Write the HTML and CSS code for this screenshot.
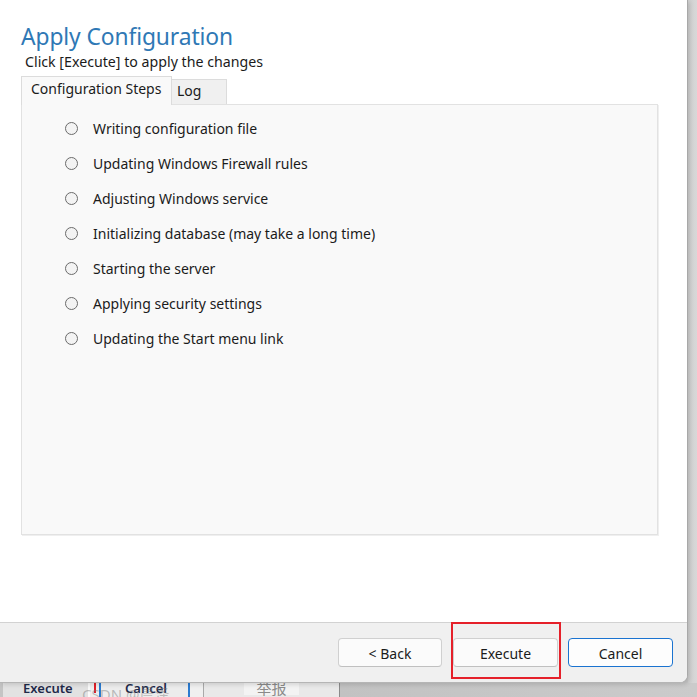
FILE: index.html
```html
<!DOCTYPE html>
<html lang="en">
<head>
<meta charset="utf-8">
<title>Apply Configuration</title>
<link rel="stylesheet" href="styles.css">
</head>
<body>
<div class="screen">
  <div class="top-row">
    <div class="window">
      <div class="main">
        <h1 class="title">Apply Configuration</h1>
        <p class="subtitle">Click [Execute] to apply the changes</p>
        <div class="tabs">
          <div class="tab tab-active">Configuration Steps</div>
          <div class="tab tab-log">Log</div>
        </div>
        <div class="panel">
          <ul class="steps">
            <li class="step"><span class="radio"></span><span class="step-text">Writing configuration file</span></li>
            <li class="step"><span class="radio"></span><span class="step-text">Updating Windows Firewall rules</span></li>
            <li class="step"><span class="radio"></span><span class="step-text">Adjusting Windows service</span></li>
            <li class="step"><span class="radio"></span><span class="step-text">Initializing database (may take a long time)</span></li>
            <li class="step"><span class="radio"></span><span class="step-text">Starting the server</span></li>
            <li class="step"><span class="radio"></span><span class="step-text">Applying security settings</span></li>
            <li class="step"><span class="radio"></span><span class="step-text">Updating the Start menu link</span></li>
          </ul>
        </div>
      </div>
      <div class="footer">
        <button class="btn btn-back">&lt; Back</button>
        <button class="btn btn-exec">Execute<span class="highlight"></span></button>
        <button class="btn btn-default">Cancel</button>
      </div>
    </div>
    <div class="gutter"></div>
  </div>
  <div class="under">
    <div class="u-seg u-a"><span class="u-text u-bold">Execute</span></div>
    <div class="u-seg u-b"><span class="u-red"></span><span class="u-blue"></span></div>
    <div class="u-seg u-c"><span class="u-text u-bold">Cancel</span></div>
    <div class="u-seg u-d"></div>
    <div class="u-seg u-e"><span class="u-btn"><span class="u-text u-light">举报</span></span></div>
    <div class="u-seg u-f"></div>
    <span class="watermark">CSDN @晨泽</span>
  </div>
</div>
</body>
</html>
```
FILE: styles.css
```css
* { box-sizing: border-box; }
html, body { margin: 0; padding: 0; }
body {
  width: 697px;
  height: 697px;
  overflow: hidden;
  font-family: "Noto Sans", "Open Sans", "Liberation Sans", sans-serif;
  color: #1b1b1b;
}
.screen {
  width: 697px;
  height: 697px;
  display: flex;
  flex-direction: column;
  background: #c9c9c9;
  position: relative;
  overflow: hidden;
}
.top-row {
  display: flex;
  height: 683px;
  flex: none;
}
.window {
  width: 688px;
  height: 683px;
  background: #ffffff;
  display: flex;
  flex-direction: column;
  border-bottom-right-radius: 8px;
  border-right: 1px solid #a8a8a8;
  border-bottom: 1px solid #b5b5b5;
  overflow: hidden;
  position: relative;
  z-index: 2;
  box-shadow: 2px 2px 4px rgba(0,0,0,0.12);
}
.gutter {
  flex: 1;
  background: linear-gradient(to right, #cfcfcf, #d8d8d8);
}
.main {
  flex: 1;
  padding: 23px 0 0 21px;
  display: flex;
  flex-direction: column;
}
.title {
  margin: 0;
  font-weight: 400;
  font-size: 22.8px;
  line-height: 28px;
  color: #2f78b5;
  letter-spacing: -0.1px;
}
.subtitle {
  margin: 2px 0 0 4px;
  font-size: 14.2px;
  line-height: 18px;
  color: #1b1b1b;
}
.tabs {
  display: flex;
  align-items: flex-end;
  margin-top: 5px;
  height: 28px;
  position: relative;
  z-index: 1;
}
.tab {
  font-size: 14px;
  border: 1px solid #dcdcdc;
  border-bottom: none;
}
.tab-active {
  width: 151px;
  background: #f9f9f9;
  padding: 2px 0 0 9px;
  line-height: 20px;
  margin-bottom: -1px;
  height: 29px;
}
.tab-log {
  width: 55px;
  height: 25px;
  background: #f0f0f0;
  border-left: none;
  padding: 1px 0 0 5px;
  line-height: 20px;
}
.panel {
  width: 637px;
  height: 431px;
  background: #f9f9f9;
  border: 1px solid #e2e2e2;
  box-shadow: 1px 1px 0 #efefef;
  padding: 6px 0 0 43px;
}
.steps {
  list-style: none;
  margin: 0;
  padding: 0;
}
.step {
  height: 35px;
  display: flex;
  align-items: center;
  font-size: 14px;
}
.radio {
  width: 13px;
  height: 13px;
  border-radius: 50%;
  border: 1px solid #6b6b6b;
  background: #f3f3f3;
  flex: none;
  margin-right: 15px;
}
.step-text { color: #1b1b1b; }
.footer {
  height: 60px;
  flex: none;
  background: #f0f0f0;
  border-top: 1px solid #d2d2d2;
  display: flex;
  justify-content: flex-end;
  align-items: flex-start;
  padding: 15px 14px 0 0;
}
.btn {
  width: 105px;
  height: 29px;
  font-family: inherit;
  font-size: 14px;
  color: #1b1b1b;
  background: #fbfbfb;
  border: 1px solid #d0d0d0;
  border-bottom-color: #c0c0c0;
  border-radius: 4px;
  padding: 1px 0 0;
  position: relative;
}
.btn-back { width: 104px; margin-right: 11px; }
.btn-exec { margin-right: 10px; }
.btn-default {
  border: 1.5px solid #1a73d0;
  background: #fdfdfd;
}
.highlight {
  position: absolute;
  left: -3px;
  top: -17px;
  width: 110px;
  height: 57px;
  border: 2px solid #e5202a;
  pointer-events: none;
}
.under {
  flex: 1;
  display: flex;
  position: relative;
  background: #e4e4e4;
}
.u-seg { height: 100%; position: relative; overflow: hidden; }
.u-a { width: 88px; background: #e2e2e2; border-left: 3px solid #c4c4c4; padding-left: 20px; }
.u-b { width: 22px; background: #eeeeee; border-left: 2px solid #fafafa; }
.u-red { position: absolute; left: 4px; top: 0; width: 2px; height: 10px; background: #e0202a; }
.u-blue { position: absolute; left: 9px; top: 0; width: 2px; height: 14px; background: #2b7bd0; }
.u-c { width: 80px; background: #ececec; padding-left: 15px; border-right: 2px solid #2b7bd0; }
.u-d { width: 14px; background: #f0f0f0; border-right: 1px solid #a9a9a9; }
.u-e { width: 136px; background: #e9e9e9; padding-left: 40px; border-right: 1px solid #8a8a8a; }
.u-btn { display: block; width: 55px; height: 100%; background: #f3f3f3; text-align: center; }
.u-f { flex: 1; background: linear-gradient(to right, #c2c2c2, #cbcbcb); }
.u-text {
  display: block;
  font-size: 13px;
  line-height: 14px;
  margin-top: -2px;
  white-space: nowrap;
}
.u-bold { font-weight: 600; color: #1f2a4a; }
.u-light { color: #8a8a8a; font-size: 15px; font-family: "Noto Sans CJK SC", sans-serif; }
.watermark {
  position: absolute;
  left: 82px;
  top: 3px;
  font-size: 15px;
  line-height: 16px;
  color: rgba(120,120,120,0.45);
  font-family: "Noto Sans", "Noto Sans CJK SC", sans-serif;
  white-space: nowrap;
}
```
